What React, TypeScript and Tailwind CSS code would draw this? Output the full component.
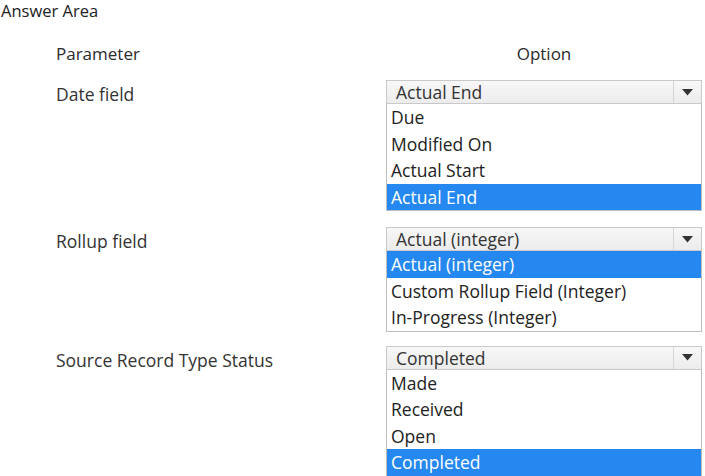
import React from "react";

type DD = { value: string; items: string[]; selected: number };

function Dropdown({ value, items, selected }: DD) {
  return (
    <div className="w-[316px]">
      <div className="flex h-[24px] border border-[#c9c9c9] bg-gradient-to-b from-[#f7f7f7] to-[#ececec]">
        <div className="flex-1 pl-[9px] text-[17.5px] leading-[22px] text-[#333] whitespace-nowrap">{value}</div>
        <div className="w-[28px] border-l border-[#d6d6d6] flex items-center justify-center">
          <svg width="11" height="7" viewBox="0 0 11 7">
            <path d="M0 0 L11 0 L5.5 6.5 Z" fill="#333" />
          </svg>
        </div>
      </div>
      <div className="border border-t-0 border-[#bdbdbd] bg-white">
        {items.map((it, i) => (
          <div
            key={it}
            className={
              "h-[26.5px] pl-[4px] text-[17.5px] leading-[26px] whitespace-nowrap " +
              (i === selected ? "bg-[#2488f0] text-white" : "text-[#222]")
            }
          >
            {it}
          </div>
        ))}
      </div>
    </div>
  );
}

export default function App() {
  return (
    <div className="w-[705px] h-[476px] bg-white text-[#2b2b2b] overflow-hidden" style={{ fontFamily: "'Open Sans', 'Noto Sans', sans-serif" }}>
      <div className="pl-[1px] text-[16.5px] leading-[22px] text-[#222]">Answer Area</div>
      <div className="flex mt-[22px]">
        <div className="w-[386px] pl-[56px] text-[17px] leading-[20px]">Parameter</div>
        <div className="w-[316px] text-center text-[17px] leading-[20px]">Option</div>
      </div>
      <div className="flex mt-[16px]">
        <div className="w-[386px] pl-[56px] pt-[2px] text-[17.5px] leading-[24px] text-[#333]">Date field</div>
        <Dropdown value="Actual End" items={["Due", "Modified On", "Actual Start", "Actual End"]} selected={3} />
      </div>
      <div className="flex mt-[16px]">
        <div className="w-[386px] pl-[56px] pt-[2px] text-[17.5px] leading-[24px] text-[#333]">Rollup field</div>
        <Dropdown
          value="Actual (integer)"
          items={["Actual (integer)", "Custom Rollup Field (Integer)", "In-Progress (Integer)"]}
          selected={0}
        />
      </div>
      <div className="flex mt-[14px]">
        <div className="w-[386px] pl-[56px] pt-[2px] text-[17.5px] leading-[24px] text-[#333]">Source Record Type Status</div>
        <Dropdown value="Completed" items={["Made", "Received", "Open", "Completed"]} selected={3} />
      </div>
    </div>
  );
}
